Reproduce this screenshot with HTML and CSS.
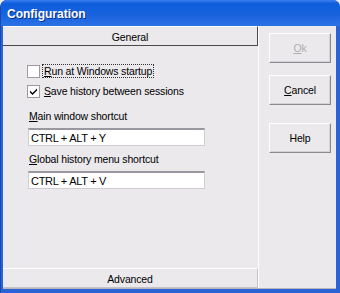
FILE: index.html
```html
<!DOCTYPE html>
<html lang="en">
<head>
  <meta charset="UTF-8">
  <title>Configuration</title>
  <link rel="stylesheet" href="styles.css">
</head>
<body>
  <div class="window">
    <div class="titlebar">
      <span class="title">Configuration</span>
    </div>
    <div class="client">
      <div class="outlook">
        <div class="group-head">General</div>
        <div class="group-body">
          <div class="check">
            <span class="box"></span>
            <span class="caption focused"><u>R</u>un at Windows startup</span>
          </div>
          <div class="check">
            <span class="box">
              <svg width="9" height="9" viewBox="0 0 9 9"><path d="M1 3.5 L3.5 6 L8 1.5 L8 3.5 L3.5 8 L1 5.5 Z" fill="#000"/></svg>
            </span>
            <span class="caption"><u>S</u>ave history between sessions</span>
          </div>
          <div class="field">
            <label for="mainShortcut"><u>M</u>ain window shortcut</label>
            <input type="text" id="mainShortcut" value="CTRL + ALT + Y">
          </div>
          <div class="field">
            <label for="globalShortcut"><u>G</u>lobal history menu shortcut</label>
            <input type="text" id="globalShortcut" value="CTRL + ALT + V">
          </div>
        </div>
        <div class="group-head advanced">Advanced</div>
      </div>
      <div class="buttons">
        <button class="btn disabled"><u>O</u>k</button>
        <button class="btn"><u>C</u>ancel</button>
        <button class="btn help">Help</button>
      </div>
    </div>
  </div>
</body>
</html>
```

FILE: styles.css
```css
:root {
  --face: #ebe9ec;
  --frame: #2b63d6;
  --shadow: #8c8a90;
  --dark: #4a4a4a;
  --text: #000000;
}

* {
  box-sizing: border-box;
}

body {
  margin: 0;
  width: 340px;
  height: 293px;
  overflow: hidden;
  font-family: "Liberation Sans", Arial, sans-serif;
  font-size: 10.5px;
  letter-spacing: -0.15px;
  color: var(--text);
  background-color: var(--face);
}

.window {
  display: flex;
  flex-direction: column;
  width: 340px;
  height: 293px;
  background-color: var(--frame);
  border-radius: 7px 7px 0 0;
  border-left: 1px solid #1b47b0;
  overflow: hidden;
}

.titlebar {
  height: 26px;
  display: flex;
  align-items: center;
  padding: 1px 0 0 6px;
  background: linear-gradient(to bottom, #3a7ef0 0%, #0d5ddc 14%, #1a63de 60%, #2c73e6 100%);
}

.title {
  color: #ffffff;
  font-weight: bold;
  font-size: 12px;
  letter-spacing: 0;
  text-shadow: 1px 1px 0 #0a2f8a;
}

.client {
  flex: 1;
  display: flex;
  margin: 0 4px 4px 2px;
  background-color: var(--face);
  border-bottom: 1px solid #b9b7bc;
}

.outlook {
  width: 256px;
  display: flex;
  flex-direction: column;
  border-right: 1px solid #ffffff;
}

.group-head {
  height: 20px;
  display: flex;
  align-items: center;
  justify-content: center;
  border-top: 1px solid #ffffff;
  border-bottom: 1px solid var(--dark);
  border-right: 1px solid var(--dark);
  padding-top: 1px;
}

.group-head.advanced {
  border-bottom: 1px solid #c5c3c8;
  border-right: 1px solid #c5c3c8;
}

.group-body {
  flex: 1;
  display: flex;
  flex-direction: column;
  padding: 17px 0 0 24px;
}

.check {
  display: flex;
  align-items: center;
  height: 16px;
  margin-bottom: 4px;
}

.box {
  width: 13px;
  height: 13px;
  margin-right: 2px;
  display: flex;
  align-items: center;
  justify-content: center;
  background-color: #ffffff;
  border: 1px solid #9c9aa0;
}

.caption {
  padding: 0 1px;
  border: 1px dotted transparent;
}

.caption.focused {
  border-color: #333333;
}

.field {
  display: flex;
  flex-direction: column;
  margin-top: 6px;
}

.field label {
  height: 14px;
  line-height: 14px;
  padding-left: 2px;
  margin-bottom: 5px;
}

.field input {
  width: 177px;
  height: 18px;
  margin: 0 0 0 1px;
  padding: 1px 2px 0;
  font-family: inherit;
  font-size: 11px;
  letter-spacing: -0.3px;
  color: var(--text);
  background-color: #ffffff;
  border: 1px solid #cfcdd2;
  border-top: 2px solid #9a989e;
  outline: none;
}

.buttons {
  flex: 1;
  display: flex;
  flex-direction: column;
  padding: 7px 0 0 10px;
}

.btn {
  width: 62px;
  height: 30px;
  padding: 0;
  margin-bottom: 12px;
  font-family: inherit;
  font-size: 10.5px;
  letter-spacing: -0.15px;
  color: var(--text);
  background-color: var(--face);
  border: 1px solid;
  border-color: #ffffff var(--shadow) var(--shadow) #ffffff;
  box-shadow: inset -1px -1px 0 #d4d2d6;
}

.btn.disabled {
  color: #aeacb2;
}

.btn.help {
  margin-top: 6px;
}
```
